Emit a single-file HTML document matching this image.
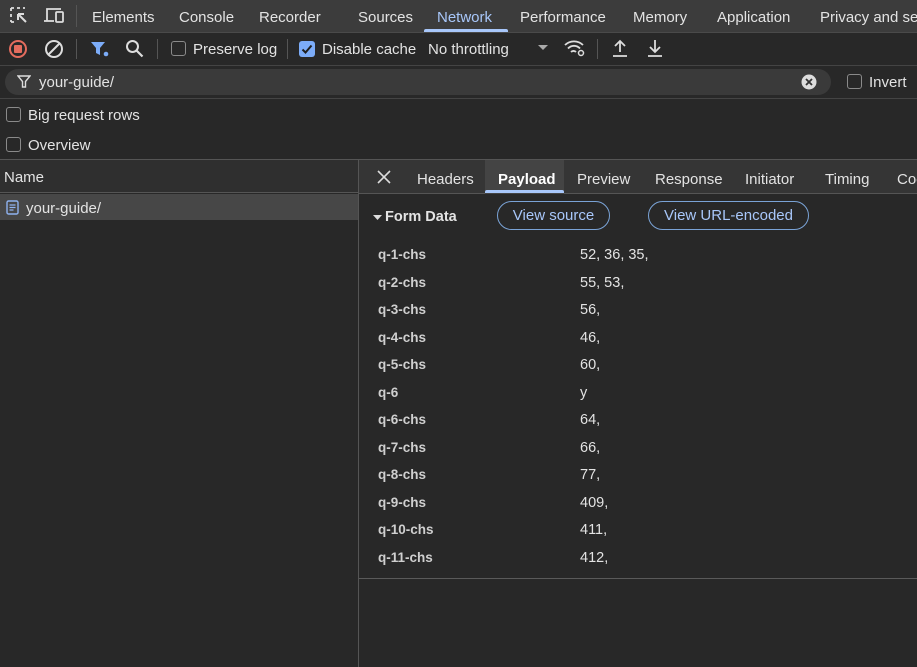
<!DOCTYPE html>
<html><head><meta charset="utf-8"><style>
*{box-sizing:border-box;margin:0;padding:0}
body{width:917px;height:667px;overflow:hidden;background:#282828;font-family:"Segoe UI","Liberation Sans",sans-serif;font-size:15px;line-height:21px;color:#e3e3e3;position:relative}
.abs{position:absolute;white-space:nowrap}
.tabbar{left:0;top:0;width:917px;height:33px;background:#3c3c3c;border-bottom:1px solid #4a4a4a}
.tb{top:7px;font-size:15px;color:#e3e3e3}
.toolbar{left:0;top:33px;width:917px;height:33px;background:#282828;border-bottom:1px solid #444}
.sep{width:1px;height:20px;background:#555;top:39px}
.cb{width:15px;height:15px;border:1.5px solid #8a8a8a;border-radius:3px}
.filter{left:5px;top:69px;width:826px;height:26px;background:#3a3a3a;border-radius:13px}
.row{font-size:13.5px;font-weight:bold;color:#cfcfcf}
.val{font-size:14.5px;color:#e3e3e3;margin-top:2px}
.btn{border:1px solid #7aa3d6;border-radius:15px;height:29px;color:#a8c7fa;font-size:15px;text-align:center;line-height:28px}
</style></head><body>
<div class="abs tabbar"></div>
<svg class="abs" style="left:9px;top:6px" width="22" height="20" viewBox="0 0 22 20"><path d="M2 2h3M8 2h3M14 2h2M2 2v3M2 8v3M2 14v2M2 16h3" stroke="#ddd" stroke-width="1.8" fill="none"/><path d="M9 8l8 8M9 8h6M9 8v6" stroke="#ddd" stroke-width="2" fill="none"/></svg>
<svg class="abs" style="left:43px;top:7px" width="22" height="18" viewBox="0 0 22 18"><path d="M4 14V2h14" stroke="#ddd" stroke-width="1.8" fill="none"/><path d="M1 14h10" stroke="#ddd" stroke-width="1.8"/><rect x="13" y="5" width="7" height="10" rx="1" stroke="#ddd" stroke-width="1.8" fill="none"/></svg>
<div class="abs" style="left:76px;top:5px;width:1px;height:22px;background:#555"></div>
<div class="abs tb" style="left:92px">Elements</div>
<div class="abs tb" style="left:179px">Console</div>
<div class="abs tb" style="left:259px">Recorder</div>
<div class="abs tb" style="left:358px">Sources</div>
<div class="abs tb" style="left:437px;color:#a8c7fa">Network</div>
<div class="abs" style="left:424px;top:29px;width:84px;height:3px;background:#a8c7fa;border-radius:2px 2px 0 0"></div>
<div class="abs tb" style="left:520px">Performance</div>
<div class="abs tb" style="left:633px">Memory</div>
<div class="abs tb" style="left:717px">Application</div>
<div class="abs tb" style="left:820px">Privacy and security</div>

<div class="abs toolbar"></div>
<svg class="abs" style="left:8px;top:39px" width="20" height="20"><circle cx="10" cy="10" r="8" stroke="#e46c5e" stroke-width="2" fill="none"/><rect x="6" y="6" width="8" height="8" rx="1" fill="#e46c5e"/></svg>
<svg class="abs" style="left:44px;top:39px" width="20" height="20"><circle cx="10" cy="10" r="8" stroke="#ddd" stroke-width="2" fill="none"/><path d="M4.5 15.5L15.5 4.5" stroke="#ddd" stroke-width="2"/></svg>
<div class="abs sep" style="left:76px"></div>
<svg class="abs" style="left:90px;top:40px" width="20" height="18"><path d="M1 2h14l-5 6v7l-4 -2V8z" fill="#7cacf8"/><circle cx="16" cy="14" r="2.3" fill="#7cacf8"/></svg>
<svg class="abs" style="left:125px;top:39px" width="20" height="20"><circle cx="7.5" cy="7.5" r="5.5" stroke="#ddd" stroke-width="2" fill="none"/><path d="M11.5 11.5l6 6" stroke="#ddd" stroke-width="2.2"/></svg>
<div class="abs sep" style="left:157px"></div>
<div class="abs cb" style="left:171px;top:41px"></div>
<div class="abs" style="left:193px;top:39px">Preserve log</div>
<div class="abs sep" style="left:287px"></div>
<div class="abs" style="left:299px;top:41px;width:16px;height:16px;background:#7cacf8;border-radius:3px"><svg width="16" height="16"><path d="M3.5 8.5l3 3 6-7" stroke="#1f1f1f" stroke-width="2" fill="none"/></svg></div>
<div class="abs" style="left:322px;top:39px">Disable cache</div>
<div class="abs" style="left:428px;top:39px">No throttling</div>
<svg class="abs" style="left:538px;top:45px" width="10" height="6"><path d="M0 0h10L5 5z" fill="#aaa"/></svg>
<svg class="abs" style="left:563px;top:38px" width="24" height="20"><path d="M2 7a13 13 0 0 1 18 0M5 10.5a8 8 0 0 1 12 0M8 14a3.5 3.5 0 0 1 5 0" stroke="#ddd" stroke-width="1.8" fill="none"/><circle cx="18" cy="15" r="2.5" stroke="#ddd" stroke-width="1.5" fill="none"/></svg>
<div class="abs sep" style="left:597px"></div>
<svg class="abs" style="left:611px;top:39px" width="18" height="19"><path d="M9 13V2M4 7l5-5 5 5M2 17h14" stroke="#ddd" stroke-width="1.8" fill="none"/></svg>
<svg class="abs" style="left:646px;top:39px" width="18" height="19"><path d="M9 1v12M4 8l5 5 5-5M2 17h14" stroke="#ddd" stroke-width="1.8" fill="none"/></svg>

<div class="abs filter"></div>
<svg class="abs" style="left:17px;top:75px" width="14" height="13"><path d="M1 1h12l-4.5 5.5V12H5.5V6.5z" stroke="#ddd" stroke-width="1.4" fill="none"/></svg>
<div class="abs" style="left:39px;top:72px">your-guide/</div>
<svg class="abs" style="left:801px;top:74px" width="16" height="16"><circle cx="8" cy="8" r="7.5" fill="#ddd"/><path d="M5 5l6 6M11 5l-6 6" stroke="#333" stroke-width="1.8"/></svg>
<div class="abs cb" style="left:847px;top:74px"></div>
<div class="abs" style="left:869px;top:72px">Invert</div>
<div class="abs" style="left:0;top:98px;width:917px;height:1px;background:#444"></div>

<div class="abs cb" style="left:6px;top:107px"></div>
<div class="abs" style="left:28px;top:105px">Big request rows</div>
<div class="abs cb" style="left:6px;top:137px"></div>
<div class="abs" style="left:28px;top:135px">Overview</div>
<div class="abs" style="left:0;top:159px;width:917px;height:1px;background:#555"></div>

<div class="abs" style="left:0;top:160px;width:358px;height:33px;background:#2f2f2f;border-bottom:1px solid #555"></div>
<div class="abs" style="left:4px;top:167px">Name</div>
<div class="abs" style="left:0;top:194px;width:358px;height:26px;background:#474747"></div>
<svg class="abs" style="left:6px;top:200px" width="13" height="15"><rect x="1" y="1" width="11" height="13" rx="1.5" stroke="#8fb3f0" stroke-width="1.4" fill="none"/><path d="M3.5 5h6M3.5 7.5h6M3.5 10h4" stroke="#8fb3f0" stroke-width="1.2"/></svg>
<div class="abs" style="left:26px;top:198px">your-guide/</div>
<div class="abs" style="left:358px;top:160px;width:1px;height:507px;background:#555"></div>

<div class="abs" style="left:359px;top:160px;width:558px;height:34px;background:#353535;border-bottom:1px solid #555"></div>
<svg class="abs" style="left:377px;top:170px" width="14" height="14"><path d="M1 1l12 12M13 1L1 13" stroke="#ddd" stroke-width="1.6"/></svg>
<div class="abs" style="left:485px;top:160px;width:79px;height:34px;background:#444"></div>
<div class="abs" style="left:485px;top:190px;width:79px;height:3px;background:#a8c7fa;border-radius:2px 2px 0 0"></div>
<div class="abs tb" style="left:417px;top:169px">Headers</div>
<div class="abs tb" style="left:498px;top:169px;font-weight:bold;color:#fff">Payload</div>
<div class="abs tb" style="left:577px;top:169px">Preview</div>
<div class="abs tb" style="left:655px;top:169px">Response</div>
<div class="abs tb" style="left:745px;top:169px">Initiator</div>
<div class="abs tb" style="left:825px;top:169px">Timing</div>
<div class="abs tb" style="left:897px;top:169px">Cookies</div>

<svg class="abs" style="left:373px;top:215px" width="9" height="6"><path d="M0 0h9L4.5 5z" fill="#ddd"/></svg>
<div class="abs" style="left:385px;top:207px;font-weight:bold;font-size:14.5px">Form Data</div>
<div class="abs btn" style="left:497px;top:201px;width:113px">View source</div>
<div class="abs btn" style="left:648px;top:201px;width:161px">View URL-encoded</div>

<div class="abs row" style="left:378px;top:244px">q-1-chs</div><div class="abs val" style="left:580px;top:243px">52, 36, 35,</div>
<div class="abs row" style="left:378px;top:272px">q-2-chs</div><div class="abs val" style="left:580px;top:271px">55, 53,</div>
<div class="abs row" style="left:378px;top:299px">q-3-chs</div><div class="abs val" style="left:580px;top:298px">56,</div>
<div class="abs row" style="left:378px;top:327px">q-4-chs</div><div class="abs val" style="left:580px;top:326px">46,</div>
<div class="abs row" style="left:378px;top:354px">q-5-chs</div><div class="abs val" style="left:580px;top:353px">60,</div>
<div class="abs row" style="left:378px;top:382px">q-6</div><div class="abs val" style="left:580px;top:381px">y</div>
<div class="abs row" style="left:378px;top:409px">q-6-chs</div><div class="abs val" style="left:580px;top:408px">64,</div>
<div class="abs row" style="left:378px;top:437px">q-7-chs</div><div class="abs val" style="left:580px;top:436px">66,</div>
<div class="abs row" style="left:378px;top:464px">q-8-chs</div><div class="abs val" style="left:580px;top:463px">77,</div>
<div class="abs row" style="left:378px;top:492px">q-9-chs</div><div class="abs val" style="left:580px;top:491px">409,</div>
<div class="abs row" style="left:378px;top:519px">q-10-chs</div><div class="abs val" style="left:580px;top:518px">411,</div>
<div class="abs row" style="left:378px;top:547px">q-11-chs</div><div class="abs val" style="left:580px;top:546px">412,</div>
<div class="abs" style="left:359px;top:578px;width:558px;height:1px;background:#5a5a5a"></div>
</body></html>
